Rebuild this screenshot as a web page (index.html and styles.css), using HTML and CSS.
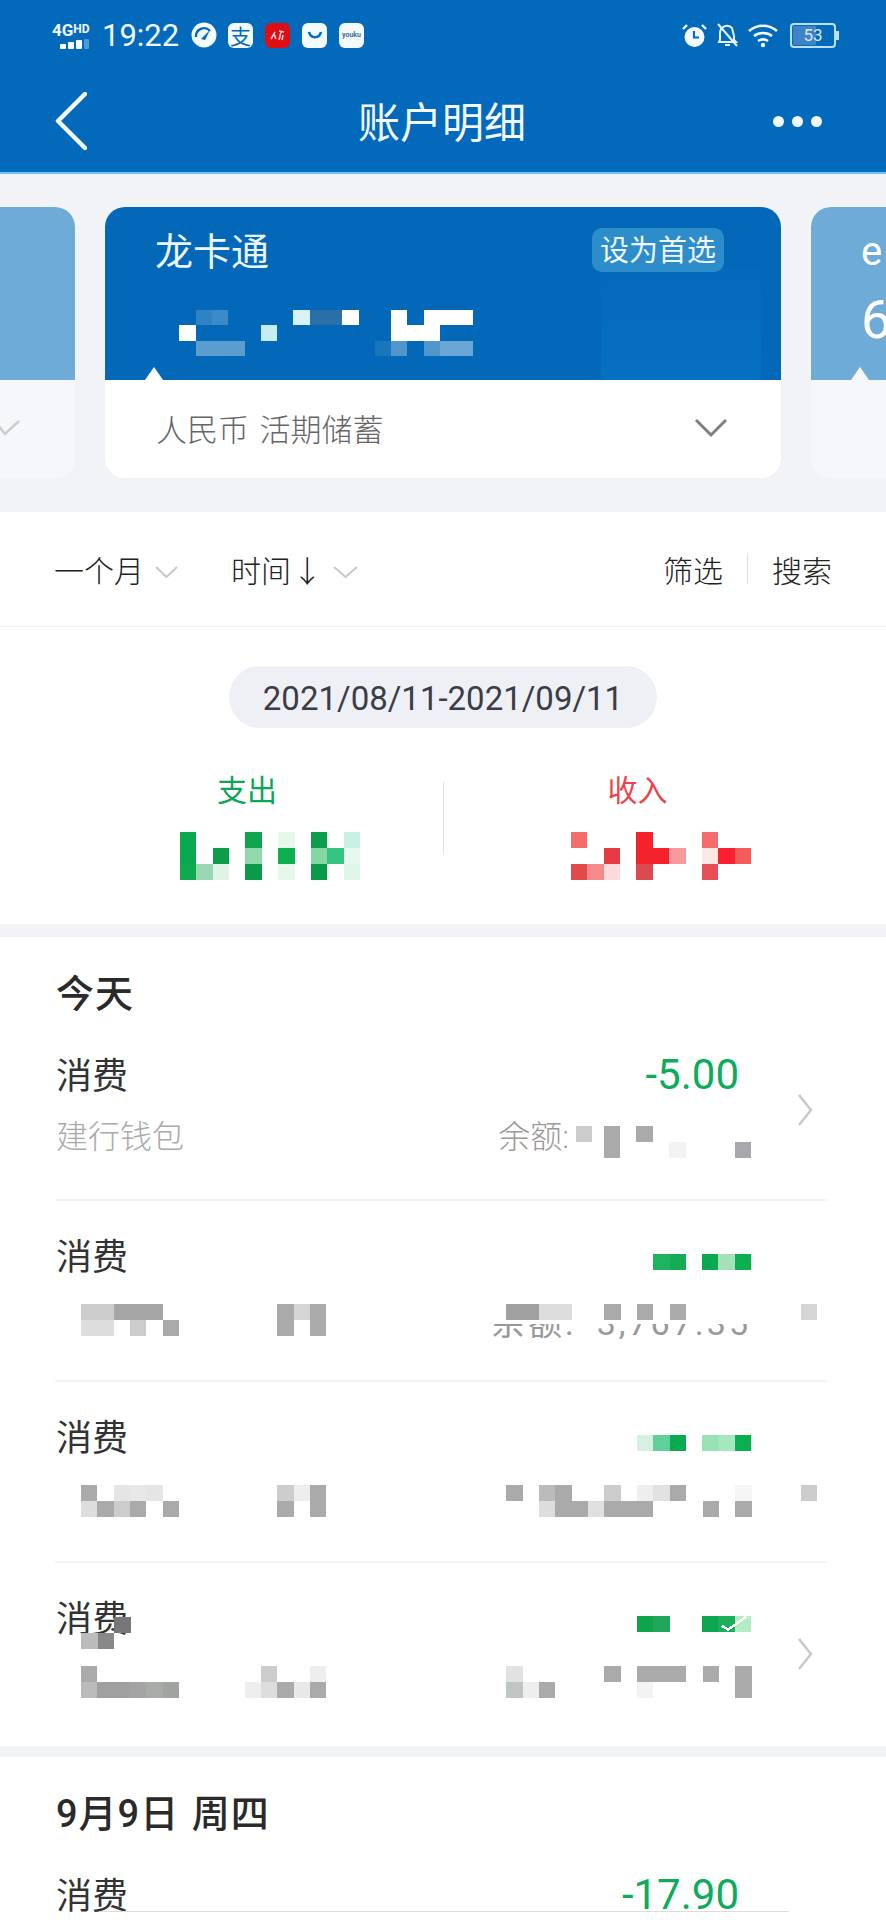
FILE: index.html
```html
<!DOCTYPE html>
<html lang="zh-CN">
<head>
    <meta charset="UTF-8">
    <title>账户明细</title>
    <link rel="stylesheet" href="styles.css">
</head>
<body>
<div class="page">
    <header class="header">
        <div class="status">
            <div class="net">
                <div class="net-text">4G<small>HD</small></div>
                <svg class="net-bars" width="30" height="10" viewBox="0 0 30 10"><rect x="0" y="5" width="6" height="5" rx="1" fill="#fff"/><rect x="8" y="3" width="6" height="7" rx="1" fill="#fff"/><rect x="16" y="1" width="6" height="9" rx="1" fill="#fff"/><rect x="24" y="0" width="5" height="10" rx="1" fill="#4f9bd8"/></svg>
            </div>
            <span class="clock">19:22</span>
            <svg class="app-icon" width="26" height="26" viewBox="0 0 26 26"><circle cx="13" cy="13" r="12.5" fill="#f4fbff"/><path d="M5 15a8 8 0 0 1 14-6" fill="none" stroke="#0369bb" stroke-width="2.4"/><path d="M10 17l9-9-5 10z" fill="#0369bb"/></svg>
            <span class="app-box app-pay">支</span>
            <span class="app-box app-red"><svg width="18" height="14" viewBox="0 0 18 14"><path d="M2 11l4-7M5 6l2 5M10 3l5 1M12 4l-2 8M14 7l-1 5" fill="none" stroke="#f8c8c8" stroke-width="1.6"/></svg></span>
            <span class="app-box"><svg width="16" height="8" viewBox="0 0 16 8"><path d="M2 1c2 7 10 7 12 0" fill="none" stroke="#0369bb" stroke-width="2.6"/></svg></span>
            <span class="app-box app-youku">youku</span>
            <div class="status-right">
                <svg width="25" height="25" viewBox="0 0 25 25"><path d="M1 6l4-4M24 6l-4-4" stroke="#f4fbff" stroke-width="2.4"/><circle cx="12.500" cy="14" r="10" fill="#f4fbff"/><path d="M12 8v6.500h5" fill="none" stroke="#0369bb" stroke-width="2.200"/></svg>
                <svg width="23" height="25" viewBox="0 0 23 25"><path d="M4 17V10a7 7 0 0 1 12-5l2 8v4l2 2H3z" fill="none" stroke="#eaf6ff" stroke-width="2"/><path d="M9 22h5M2 1l19 22" stroke="#eaf6ff" stroke-width="2"/></svg>
                <svg width="30" height="25" viewBox="0 0 30 25"><path d="M1 8c8-7 20-7 28 0M6 13c5-4 13-4 18 0M10 18c3-2 7-2 10 0" fill="none" stroke="#f4fbff" stroke-width="2.600"/><circle cx="15" cy="22" r="2.200" fill="#f4fbff"/></svg>
                <div class="battery"><div class="battery-body"><div class="battery-fill"></div><span>53</span></div><div class="battery-tip"></div></div>
            </div>
        </div>
        <nav class="nav">
            <svg class="nav-back" width="33" height="58" viewBox="0 0 33 58"><path d="M31 2L4 29l27 27" fill="none" stroke="#f2faff" stroke-width="4.500" stroke-linecap="round" stroke-linejoin="round"/></svg>
            <h1 class="nav-title">账户明细</h1>
            <div class="nav-more"><i></i><i></i><i></i></div>
        </nav>
    </header>

    <section class="carousel">
        <div class="card card-side">
            <div class="card-top"></div>
            <div class="card-bottom card-bottom-left"><svg width="28" height="18" viewBox="0 0 28 18"><path d="M2 2l10 13 14-13" fill="none" stroke="#ccc" stroke-width="2.500"/></svg></div>
        </div>
        <div class="card">
            <div class="card-top">
                <div class="card-glow"></div>
                <div class="card-head">
                    <span class="card-name">龙卡通</span>
                    <span class="card-tag">设为首选</span>
                </div>
                <svg class="mosaic card-no" viewBox="0 0 20 3" preserveAspectRatio="none"><rect x="1" y="1" fill="#fff"/><rect x="2" fill="#2f82c3"/><rect x="3" fill="#3a8bc8"/><rect x="2" y="2" fill="#5c9dd0"/><rect x="3" y="2" fill="#5c9dd0"/><rect x="4" y="2" fill="#5c9dd0"/><rect x="6" y="1" fill="#c7ecf5"/><rect x="8" fill="#d8f2f7"/><rect x="9" fill="#2a6fa8"/><rect x="10" fill="#2a6fa8"/><rect x="11" fill="#fff"/><rect x="14" fill="#fff"/><rect x="14" y="1" fill="#fff"/><rect x="15" y="1" fill="#fff"/><rect x="16" fill="#fff"/><rect x="16" y="1" fill="#fff"/><rect x="17" fill="#fff"/><rect x="18" fill="#fff"/><rect x="13" y="2" fill="#1a76bb"/><rect x="14" y="2" fill="#4f96cc"/><rect x="16" y="2" fill="#4f96cc"/><rect x="17" y="2" fill="#6aa6d6"/><rect x="18" y="2" fill="#6aa6d6"/></svg>
                <div class="card-notch"></div>
            </div>
            <div class="card-bottom">
                <span class="card-type">人民币 活期储蓄</span>
                <svg width="34" height="20" viewBox="0 0 34 20"><path d="M2 2l15 15L32 2" fill="none" stroke="#808080" stroke-width="3"/></svg>
            </div>
        </div>
        <div class="card card-side">
            <div class="card-top">
                <span class="side-name">e</span>
                <span class="side-num">6</span>
                <div class="card-notch"></div>
            </div>
            <div class="card-bottom"></div>
        </div>
    </section>

    <section class="toolbar">
        <div class="tool-left">
            <span class="tool">一个月<svg width="23" height="13" viewBox="0 0 23 13"><path d="M1 1l10.500 10L22 1" fill="none" stroke="#c4c6ca" stroke-width="1.800"/></svg></span>
            <span class="tool">时间 ↓<svg width="25" height="13" viewBox="0 0 25 13"><path d="M1 1l11.500 10L24 1" fill="none" stroke="#c4c6ca" stroke-width="1.800"/></svg></span>
        </div>
        <div class="tool-right">
            <span>筛选</span>
            <i class="tool-sep"></i>
            <span>搜索</span>
        </div>
    </section>

    <section class="summary">
        <div class="date-pill">2021/08/11-2021/09/11</div>
        <div class="stats">
            <div class="stat">
                <div class="stat-label stat-out">支出</div>
                <svg class="mosaic stat-num" viewBox="0 0 11 3" preserveAspectRatio="none"><rect fill="#0aa84f"/><rect y="1" fill="#0aa84f"/><rect y="2" fill="#0fa950"/><rect x="1" y="2" fill="#9ad8b4"/><rect x="2" y="1" fill="#0c9c4a"/><rect x="2" y="2" fill="#dff3e6"/><rect x="4" fill="#0fa54f"/><rect x="4" y="1" fill="#8fd9ac"/><rect x="4" y="2" fill="#0a9a4a"/><rect x="6" fill="#e6f7ec"/><rect x="6" y="1" fill="#0cb04f"/><rect x="6" y="2" fill="#e6f7ec"/><rect x="8" fill="#0d9c4c"/><rect x="8" y="1" fill="#85d6a5"/><rect x="8" y="2" fill="#0a9a4a"/><rect x="9" y="1" fill="#35c47f"/><rect x="10" fill="#c9f1e2"/><rect x="10" y="1" fill="#e7f8ef"/><rect x="10" y="2" fill="#dff6ea"/></svg>
            </div>
            <i class="stat-sep"></i>
            <div class="stat stat-right">
                <div class="stat-label stat-in">收入</div>
                <svg class="mosaic stat-num" viewBox="0 0 11 3" preserveAspectRatio="none"><rect fill="#f56c6c"/><rect y="2" fill="#e04a4a"/><rect x="1" y="2" fill="#f58a8a"/><rect x="2" y="1" fill="#e63b44"/><rect x="2" y="2" fill="#fadada"/><rect x="4" fill="#f4222d"/><rect x="4" y="1" fill="#f4222d"/><rect x="4" y="2" fill="#dc4a4f"/><rect x="5" y="1" fill="#f4222d"/><rect x="6" y="1" fill="#f99a9a"/><rect x="8" fill="#f56c6c"/><rect x="8" y="1" fill="#fde8e8"/><rect x="8" y="2" fill="#e65055"/><rect x="9" y="1" fill="#fb2030"/><rect x="10" y="1" fill="#f45b5b"/></svg>
            </div>
        </div>
    </section>

    <section class="day">
        <h2 class="day-title">今天</h2>

        <div class="row">
            <div class="row-main">
                <div class="row-line">
                    <span class="row-name">消费</span>
                    <span class="row-amount">-5.00</span>
                </div>
                <div class="row-sub">
                    <span>建行钱包</span>
                    <span class="row-balance">余额:<svg class="mosaic balance-num" viewBox="0 0 11 2" preserveAspectRatio="none"><rect x="0.300" fill="#ccc"/><rect x="2" fill="#aaa"/><rect x="2" y="1" fill="#aaa"/><rect x="4" fill="#aaa"/><rect x="6" y="1" fill="#f3f3f3"/><rect x="10" y="1" fill="#a8a8ac"/></svg></span>
                </div>
            </div>
            <svg class="row-arrow" width="16" height="32" viewBox="0 0 16 32"><path d="M2 1l12 15L2 31" fill="none" stroke="#c8c8c8" stroke-width="2.500"/></svg>
        </div>

        <div class="row">
            <div class="row-main">
                <div class="row-line">
                    <span class="row-name">消费</span>
                    <svg class="mosaic amount-num" viewBox="0 0 7 1" preserveAspectRatio="none"><rect x="1" fill="#1db35f"/><rect x="2" fill="#14ad55"/><rect x="4" fill="#0aa94f"/><rect x="5" fill="#a5e0b8"/><rect x="6" fill="#0aaf4f"/></svg>
                </div>
                <div class="row-masked">
                    <span class="masked-text">余额: 3,767.35</span>
                    <div class="masked-cover"></div>
                    <svg class="mosaic row-num" viewBox="0 0 45 2" preserveAspectRatio="none"><rect fill="#ccc"/><rect x="1" fill="#ccc"/><rect x="2" fill="#a6a6a6"/><rect x="3" fill="#a6a6a6"/><rect x="4" fill="#a6a6a6"/><rect y="1" fill="#ddd"/><rect x="1" y="1" fill="#ddd"/><rect x="3" y="1" fill="#ccc"/><rect x="5" y="1" fill="#aaa"/><rect x="12" fill="#aaa"/><rect x="13" fill="#d5d5d5"/><rect x="14" fill="#aaa"/><rect x="12" y="1" fill="#aaa"/><rect x="14" y="1" fill="#aaa"/><rect x="26" fill="#a0a0a0"/><rect x="27" fill="#a0a0a0"/><rect x="28" fill="#ddd"/><rect x="29" fill="#ddd"/><rect x="32" fill="#aaa"/><rect x="34" fill="#aaa"/><rect x="36" fill="#aaa"/><rect x="44" fill="#d5d5d5"/></svg>
                </div>
            </div>
            <svg class="row-arrow row-arrow-off" width="16" height="32" viewBox="0 0 16 32"></svg>
        </div>

        <div class="row">
            <div class="row-main">
                <div class="row-line">
                    <span class="row-name">消费</span>
                    <svg class="mosaic amount-num" viewBox="0 0 7 1" preserveAspectRatio="none"><rect fill="#d5f0e2"/><rect x="1" fill="#5fd09a"/><rect x="2" fill="#0aab4f"/><rect x="4" fill="#98e3b5"/><rect x="5" fill="#a5e8bf"/><rect x="6" fill="#0ab04f"/></svg>
                </div>
                <div class="row-masked">
                    <svg class="mosaic row-num" viewBox="0 0 45 2" preserveAspectRatio="none"><rect fill="#aaa"/><rect y="1" fill="#ddd"/><rect x="1" y="1" fill="#aaa"/><rect x="2" fill="#e5e5e5"/><rect x="2" y="1" fill="#ccc"/><rect x="3" fill="#e8e8e8"/><rect x="3" y="1" fill="#aaa"/><rect x="4" fill="#e5e5e5"/><rect x="5" y="1" fill="#aaa"/><rect x="12" fill="#ccc"/><rect x="12" y="1" fill="#aaa"/><rect x="13" fill="#eee"/><rect x="14" fill="#aaa"/><rect x="14" y="1" fill="#aaa"/><rect x="26" fill="#aaa"/><rect x="28" fill="#bbb"/><rect x="28" y="1" fill="#ddd"/><rect x="29" fill="#aaa"/><rect x="29" y="1" fill="#aaa"/><rect x="30" y="1" fill="#aaa"/><rect x="31" y="1" fill="#e0e0e0"/><rect x="32" fill="#ccc"/><rect x="32" y="1" fill="#aaa"/><rect x="33" y="1" fill="#aaa"/><rect x="34" fill="#eee"/><rect x="34" y="1" fill="#aaa"/><rect x="35" fill="#e2e2e2"/><rect x="36" fill="#aaa"/><rect x="38" y="1" fill="#aaa"/><rect x="40" fill="#f5f5f5"/><rect x="40" y="1" fill="#aaa"/><rect x="44" fill="#ccc"/></svg>
                </div>
            </div>
            <svg class="row-arrow row-arrow-off" width="16" height="32" viewBox="0 0 16 32"></svg>
        </div>

        <div class="row">
            <div class="row-main">
                <div class="row-line">
                    <span class="row-name row-name-masked">消费<svg class="mosaic name-mask" viewBox="0 0 3 2" preserveAspectRatio="none"><rect x="2" fill="#777"/><rect y="1" fill="#bbb"/><rect x="1" y="1" fill="#888"/></svg></span>
                    <svg class="mosaic amount-num" viewBox="0 0 7 1" preserveAspectRatio="none"><rect fill="#0fa34c"/><rect x="1" fill="#1fa859"/><rect x="4" fill="#0da54f"/><rect x="5" fill="#1db05c"/><rect x="6" fill="#b5ecc8"/><path d="M5.200 .6L5.600 .85L6.700 .05" fill="none" stroke="#fff" stroke-width=".15"/></svg>
                </div>
                <div class="row-masked">
                    <svg class="mosaic row-num" viewBox="0 0 45 2" preserveAspectRatio="none"><rect fill="#aaa"/><rect y="1" fill="#bbb"/><rect x="1" y="1" fill="#a0a0a0"/><rect x="2" y="1" fill="#a0a0a0"/><rect x="3" y="1" fill="#a4a4a4"/><rect x="4" y="1" fill="#a8aca8"/><rect x="5" y="1" fill="#a0a4a0"/><rect x="10" y="1" fill="#eee"/><rect x="11" fill="#ccc"/><rect x="11" y="1" fill="#ddd"/><rect x="12" y="1" fill="#aaa"/><rect x="13" y="1" fill="#e8e8e8"/><rect x="14" fill="#eee"/><rect x="14" y="1" fill="#aaa"/><rect x="26" fill="#e2e2e2"/><rect x="26" y="1" fill="#c0c4c2"/><rect x="27" y="1" fill="#eee"/><rect x="28" y="1" fill="#aaa"/><rect x="32" fill="#aaa"/><rect x="34" fill="#aaa"/><rect x="34" y="1" fill="#f3f3f3"/><rect x="35" fill="#aaa"/><rect x="36" fill="#aaa"/><rect x="38" fill="#aaa"/><rect x="40" fill="#aaa"/><rect x="40" y="1" fill="#aaa"/></svg>
                </div>
            </div>
            <svg class="row-arrow" width="16" height="32" viewBox="0 0 16 32"><path d="M2 1l12 15L2 31" fill="none" stroke="#c8c8c8" stroke-width="2.500"/></svg>
        </div>
    </section>

    <section class="day">
        <h2 class="day-title">9月9日 周四</h2>
        <div class="row">
            <div class="row-main">
                <div class="row-line">
                    <span class="row-name">消费</span>
                    <span class="row-amount">-17.90</span>
                </div>
            </div>
            <svg class="row-arrow row-arrow-off" width="16" height="32" viewBox="0 0 16 32"></svg>
        </div>
    </section>

    <div class="float-edge"></div>
</div>
</body>
</html>
```

FILE: styles.css
```css
* {
    box-sizing: border-box;
}
body {
    margin: 0;
    font-family: Roboto, "Noto Sans CJK SC", sans-serif;
    background-color: #f1f3f7;
}
h1, h2 {
    margin: 0;
    font-weight: 400;
}
.page {
    position: relative;
    width: 886px;
    height: 1920px;
    overflow: hidden;
}

/* header */
.header {
    height: 174px;
    background-color: #0369bb;
    border-bottom: 2px solid #6cc3ee;
    color: #f2faff;
}
.status {
    display: flex;
    align-items: center;
    height: 70px;
    padding: 0 47px 0 52px;
}
.net {
    width: 40px;
    margin-right: 10px;
}
.net-text {
    font-size: 17px;
    line-height: 16px;
    font-weight: 700;
}
.net-text small {
    font-size: 12px;
    vertical-align: 3px;
}
.net-bars {
    display: block;
    margin: 1px 0 0 8px;
}
.clock {
    font-size: 31px;
    width: 89px;
}
.app-icon {
    margin-right: 11px;
}
.app-box {
    display: flex;
    align-items: center;
    justify-content: center;
    width: 25px;
    height: 25px;
    margin-right: 12px;
    border-radius: 6px;
    background-color: #f4fbff;
    color: #0369bb;
    font-size: 21px;
    overflow: hidden;
}
.app-red {
    background-color: #dd0f14;
}
.app-youku {
    font-size: 7px;
    font-weight: 700;
    color: #3d6f9c;
}
.status-right {
    display: flex;
    align-items: center;
    gap: 9px;
    margin-left: auto;
}
.battery {
    display: flex;
    align-items: center;
    margin-left: 3px;
}
.battery-body {
    position: relative;
    width: 46px;
    height: 25px;
    border: 2px solid #b9e2f7;
    border-radius: 4px;
    font-size: 17px;
    line-height: 21px;
    text-align: center;
    color: #d6ebf8;
}
.battery-body span {
    position: relative;
}
.battery-fill {
    position: absolute;
    left: 1px;
    top: 1px;
    bottom: 1px;
    width: 23px;
    background-color: #3f82c6;
}
.battery-tip {
    width: 3px;
    height: 9px;
    background-color: #b9e2f7;
}
.nav {
    display: grid;
    grid-template-columns: 1fr auto 1fr;
    align-items: center;
    height: 102px;
    padding: 0 56px 0 54px;
}
.nav-title {
    font-size: 42px;
    line-height: 60px;
    padding-top: 6px;
}
.nav-more {
    display: flex;
    justify-self: end;
    gap: 8px;
    margin-right: 8px;
}
.nav-more i {
    width: 11px;
    height: 11px;
    border-radius: 50%;
    background-color: #f2faff;
}

/* card carousel */
.carousel {
    display: flex;
    justify-content: center;
    gap: 30px;
    height: 338px;
    padding-top: 33px;
    overflow: hidden;
}
.card {
    flex: none;
    position: relative;
    width: 676px;
    height: 271px;
    border-radius: 20px;
    background-color: #fff;
    overflow: hidden;
}
.card-top {
    position: relative;
    height: 173px;
    padding: 21px 57px 0 50px;
    background-color: #0468b8;
}
.card-glow {
    position: absolute;
    right: 20px;
    bottom: 0;
    width: 160px;
    height: 112px;
    background: linear-gradient(#0469ba, #0670c1);
}
.card-head {
    position: relative;
    display: flex;
    align-items: center;
    justify-content: space-between;
    height: 44px;
}
.card-name {
    font-size: 38px;
    margin-top: -4px;
    color: #eaf7fd;
}
.card-tag {
    width: 132px;
    height: 44px;
    padding-top: 3px;
    border-radius: 10px;
    background-color: #2d8dcb;
    font-size: 29px;
    line-height: 41px;
    text-align: center;
    color: #eef8fd;
}
.mosaic {
    display: block;
    flex: none;
    shape-rendering: crispEdges;
}
.mosaic rect {
    width: 1px;
    height: 1px;
}
.card-no {
    position: absolute;
    left: 58px;
    top: 103px;
    width: 326px;
    height: 46px;
}
.card-notch {
    position: absolute;
    left: 40px;
    bottom: 0;
    border-left: 9px solid transparent;
    border-right: 9px solid transparent;
    border-bottom: 13px solid #fff;
}
.card-bottom {
    display: flex;
    align-items: center;
    justify-content: space-between;
    height: 98px;
    padding: 0 53px 3px 51px;
}
.card-type {
    font-size: 31px;
    font-weight: 300;
    word-spacing: 3px;
    color: #666;
}
.card-side .card-top {
    background-color: #6fabd7;
    color: #fff;
}
.card-side .card-bottom {
    background-color: #f6f7fb;
}
.card-side .card-notch {
    border-bottom-color: #f6f7fb;
}
.card-bottom-left {
    justify-content: flex-end;
    padding-right: 54px;
}
.side-name {
    display: block;
    font-size: 40px;
    line-height: 48px;
}
.side-num {
    display: block;
    font-size: 54px;
    line-height: 64px;
    margin-top: 12px;
}

/* filter bar */
.toolbar {
    display: flex;
    align-items: center;
    justify-content: space-between;
    height: 115px;
    padding: 0 54px;
    background-color: #fff;
    border-bottom: 1px solid #f0ede8;
    font-size: 30px;
    font-weight: 300;
    color: #222;
}
.tool-left {
    display: flex;
    gap: 53px;
}
.tool {
    display: flex;
    align-items: center;
    gap: 11px;
    word-spacing: -6px;
}
.tool svg {
    margin-top: 6px;
}
.tool-right {
    display: flex;
    align-items: center;
    gap: 24px;
}
.tool-sep {
    width: 1px;
    height: 30px;
    background-color: #ddd;
}

/* date range and totals */
.summary {
    height: 297px;
    padding-top: 39px;
    background-color: #fff;
}
.date-pill {
    width: 428px;
    height: 62px;
    margin: 0 auto;
    border-radius: 31px;
    background-color: #eef0f5;
    font-size: 33px;
    line-height: 65px;
    text-align: center;
    color: #3a3d46;
}
.stats {
    display: flex;
    margin-top: 43px;
}
.stat {
    width: 443px;
    padding-left: 180px;
}
.stat-right {
    padding-left: 127px;
}
.stat-sep {
    width: 1px;
    height: 72px;
    margin-top: 11px;
    background-color: #dfe0e3;
}
.stat-label {
    margin-left: 37px;
    font-size: 30px;
    line-height: 40px;
}
.stat-out {
    color: #0ea55a;
}
.stat-in {
    color: #e8464f;
}
.stat-num {
    width: 180px;
    height: 48px;
    margin-top: 21px;
}

/* transactions */
.day {
    margin-top: 13px;
    padding-bottom: 2px;
    background-color: #fff;
}
.day + .day {
    margin-top: 11px;
}
.day-title {
    height: 83px;
    padding: 31px 0 0 56px;
    font-size: 38px;
    line-height: 52px;
    font-weight: 500;
    letter-spacing: 1px;
    word-spacing: 2px;
    color: #2a2a2a;
}
.row {
    display: flex;
    align-items: center;
    height: 181px;
    margin: 0 59px 0 55px;
    padding: 0 14px 0 1px;
    border-bottom: 2px solid #f3f3f3;
}
.row:last-child {
    border-bottom: 0;
}
.row-main {
    flex: 1;
    align-self: flex-start;
    min-width: 0;
}
.row-line {
    display: flex;
    align-items: center;
    justify-content: space-between;
    height: 40px;
    margin-top: 33px;
    padding-right: 12px;
}
.row-name {
    font-size: 36px;
    color: #333;
}
.row-name-masked {
    position: relative;
}
.name-mask {
    position: absolute;
    left: 25px;
    top: 27px;
    width: 50px;
    height: 32px;
}
.row-amount {
    font-size: 42px;
    padding-top: 3px;
    color: #0dab5b;
}
.amount-num {
    width: 114px;
    height: 16px;
    margin: 16px -12px 0 0;
}
.row-sub {
    display: flex;
    justify-content: space-between;
    margin-top: 22px;
    font-size: 32px;
    line-height: 44px;
    font-weight: 300;
    color: #aaa;
}
.row-balance {
    display: flex;
    align-items: center;
    color: #999;
}
.balance-num {
    width: 180px;
    height: 32px;
    margin: 10px 0 0 2px;
}
.row-masked {
    position: relative;
    height: 32px;
    margin-top: 30px;
}
.masked-text {
    position: absolute;
    right: 0;
    bottom: -6px;
    font-size: 34px;
    line-height: 38px;
    letter-spacing: 3px;
    word-spacing: 9px;
    color: #999;
}
.masked-cover {
    position: absolute;
    right: 0;
    top: -8px;
    width: 270px;
    height: 28px;
    background-color: #fff;
}
.row-num {
    position: absolute;
    left: 25px;
    top: 0;
    width: 736px;
    height: 32px;
}
.row-arrow {
    flex: none;
    margin-left: 46px;
}
.row-arrow-off {
    visibility: hidden;
}

/* edge of the panel coming up from below */
.float-edge {
    position: absolute;
    left: 99px;
    top: 1911px;
    width: 690px;
    height: 9px;
    background-color: #fff;
    border-top: 1px solid #dcdcdc;
}
```
